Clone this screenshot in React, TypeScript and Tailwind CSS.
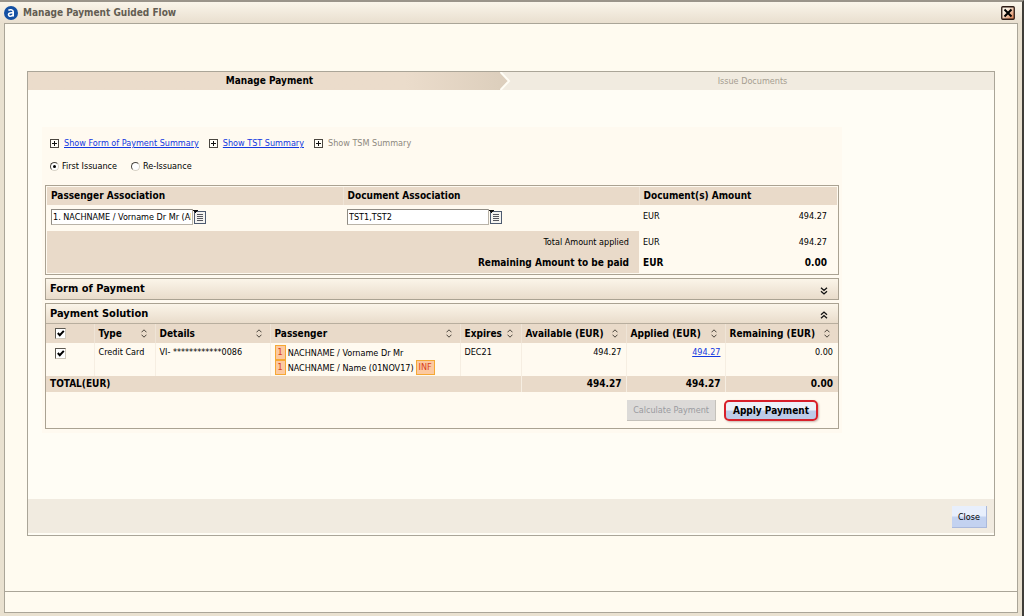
import { useState, type ReactNode } from "react";

function PlusBox() {
  return (
    <svg width="9" height="9" viewBox="0 0 9 9" shapeRendering="crispEdges" aria-hidden="true">
      <rect x="0.5" y="0.5" width="8" height="8" fill="#fffdf6" stroke="#4a4640" />
      <path d="M2 4.5h5M4.5 2v5" stroke="#111" strokeWidth="1" />
    </svg>
  );
}

function SortIcon() {
  return (
    <svg width="6" height="9" viewBox="0 0 6 9" fill="none" stroke="#4a443c" strokeWidth="1" aria-hidden="true">
      <path d="M0.5 3.3L3 0.8L5.5 3.3M0.5 5.7L3 8.2L5.5 5.7" />
    </svg>
  );
}

function DoubleChevron({ up = false }: { up?: boolean }) {
  return (
    <svg width="8" height="8" viewBox="0 0 8 8" fill="none" stroke="#111" strokeWidth="1.3" aria-hidden="true">
      {up ? (
        <path d="M1 3.7L4 1L7 3.7M1 7.2L4 4.5L7 7.2" />
      ) : (
        <path d="M1 0.8L4 3.5L7 0.8M1 4.3L4 7L7 4.3" />
      )}
    </svg>
  );
}

function ListIcon() {
  return (
    <svg width="13" height="14" viewBox="0 0 13 14" shapeRendering="crispEdges" aria-hidden="true">
      <rect x="1.5" y="1.5" width="11" height="12" fill="#f4f3f0" stroke="#4d5a70" />
      <path d="M4 4.5h6M4 6.5h6M4 8.5h6M4 10.5h6" stroke="#55565e" />
      <path d="M0 0h5v1h-1v1h-1v1h-1v-1h-1v-1h-1z" fill="#111" />
    </svg>
  );
}

function TickBox({ label, checked, onChange }: { label: string; checked: boolean; onChange: (v: boolean) => void }) {
  return (
    <span className="relative block size-[11px]">
      <input
        type="checkbox"
        aria-label={label}
        checked={checked}
        onChange={(e) => onChange(e.target.checked)}
        className="peer block size-[11px] appearance-none border border-t-[#5c5850] border-r-[#cfc8bb] border-b-[#cfc8bb] border-l-[#5c5850] bg-white"
      />
      <svg
        className="pointer-events-none absolute inset-0 hidden peer-checked:block"
        width="11"
        height="11"
        viewBox="0 0 11 11"
        aria-hidden="true"
      >
        <path d="M2.8 5L4.8 7.2L8.8 2.8" fill="none" stroke="#000" strokeWidth="2" />
      </svg>
    </span>
  );
}

function Radio({ label, checked, onSelect }: { label: string; checked: boolean; onSelect: () => void }) {
  return (
    <label className="flex items-center gap-[3px]">
      <span className="relative block size-[9px]">
        <input
          type="radio"
          name="issuance"
          checked={checked}
          onChange={onSelect}
          className="peer block size-[9px] appearance-none rounded-full border border-t-[#4a4640] border-r-[#d8d2c6] border-b-[#d8d2c6] border-l-[#4a4640] bg-white"
        />
        <span className="pointer-events-none absolute inset-[3px] hidden rounded-full bg-black peer-checked:block" />
      </span>
      {label}
    </label>
  );
}

function PickField({ label, value }: { label: string; value: string }) {
  return (
    <div className="flex items-center">
      <input
        type="text"
        aria-label={label}
        defaultValue={value}
        className="h-4 w-[142px] border border-t-[#8f8b83] border-r-[#b9b3a8] border-b-[#b9b3a8] border-l-[#8f8b83] bg-white px-px"
      />
      <button type="button" aria-label={`Select ${label}`}>
        <ListIcon />
      </button>
    </div>
  );
}

function Tag({ children }: { children: ReactNode }) {
  return (
    <span className="flex h-[15px] items-center border border-[#f5a835] bg-[#fcc9a0] px-[2px] leading-none text-[#d8401c]">
      {children}
    </span>
  );
}

const columns = [
  { name: "Type", width: "w-[61px]" },
  { name: "Details", width: "w-[115px]" },
  { name: "Passenger", width: "w-[190px]" },
  { name: "Expires", width: "w-[61px]" },
  { name: "Available (EUR)", width: "w-[105px]" },
  { name: "Applied (EUR)", width: "w-[99px]" },
  { name: "Remaining (EUR)", width: "" },
];

const bar = "flex items-center justify-between bg-linear-to-b from-[#fbf5e9] to-[#e9dccb] pr-[10px] pl-1 text-[11px] font-bold";
const frame = "border border-[#aaa292]";

export default function App() {
  const [issuance, setIssuance] = useState("first");
  const [all, setAll] = useState(true);
  const [card, setCard] = useState(true);

  return (
    <div className="flex min-h-screen flex-col border-t-2 border-r-2 border-t-[#9a948a] border-r-[#3f3d38] bg-[#e9e1d0] font-['DejaVu_Sans_Condensed','DejaVu_Sans',sans-serif] text-[9px] leading-[14px] text-black">
      <header className="flex h-[21px] items-center justify-between bg-linear-to-b from-[#faf5ea] to-[#e9dfcf] pr-[7px] pl-1">
        <div className="flex items-center gap-[5px]">
          <svg width="14" height="14" viewBox="0 0 14 14" aria-hidden="true">
            <circle cx="7" cy="7" r="7" fill="#1450a3" />
            <path
              d="M4.4 4.3C5.6 3.5 9.2 3.3 9.2 5.8V10.4M9.2 7C7.2 6.6 4.5 6.8 4.5 8.6C4.5 10.8 8.2 10.6 9.2 8.6"
              fill="none"
              stroke="#fff"
              strokeWidth="1.6"
            />
          </svg>
          <h1 className="text-[10px] font-bold text-[#635d52]">Manage Payment Guided Flow</h1>
        </div>
        <button type="button" aria-label="Close window">
          <svg width="14" height="14" viewBox="0 0 14 14" aria-hidden="true">
            <defs>
              <linearGradient id="closeFill" x1="0" y1="0" x2="1" y2="1">
                <stop offset="0.3" stopColor="#fbf0e2" />
                <stop offset="1" stopColor="#d9733f" />
              </linearGradient>
            </defs>
            <rect x="0.75" y="0.75" width="12.5" height="12.5" rx="1" fill="url(#closeFill)" stroke="#2c1a14" strokeWidth="1.3" />
            <path d="M3.5 3.5L10.5 10.5M10.5 3.5L3.5 10.5" stroke="#000" strokeWidth="2" />
          </svg>
        </button>
      </header>

      <div className="mr-1 mb-[3px] ml-1 flex grow flex-col border border-[#aaa598] bg-[#fffbf0]">
        <main className="flex grow flex-col px-[22px] pt-[47px] pb-[55px]">
          <div className="flex grow flex-col border border-[#aaa598] bg-[#fffdf5] pb-[2px]">
            <ol className="grid h-[18px] grid-cols-2 bg-[#f1ebe0] text-center">
              <li aria-current="step" className="flex items-center font-bold">
                <span className="h-full grow bg-linear-to-r from-[#ebdccb] from-80% to-[#ddcfbd] pt-[2px] pl-[11px] text-[10px]">Manage Payment</span>
                <svg width="11" height="18" viewBox="0 0 11 18" aria-hidden="true">
                  <path d="M0 0L9 9L0 18Z" fill="#ddcfbd" />
                  <path d="M0.5 0L9 9L0.5 18" fill="none" stroke="#fffdf5" strokeWidth="2" />
                </svg>
              </li>
              <li className="pt-[2px] text-[#a59d90]">Issue Documents</li>
            </ol>

            <div className="mt-[37px] ml-[14px] grow">
              <div className="max-w-[800px] bg-[#fffaf0] px-[3px] pt-2 pb-1">
                <div className="flex h-4 items-center gap-[10px] pl-[5px]">
                  <div className="flex items-center gap-[5px]">
                    <PlusBox />
                    <a href="#fop" className="text-[#1238e0] underline">Show Form of Payment Summary</a>
                  </div>
                  <div className="flex items-center gap-[5px]">
                    <PlusBox />
                    <a href="#tst" className="text-[#1238e0] underline">Show TST Summary</a>
                  </div>
                  <div className="flex items-center gap-[5px]">
                    <PlusBox />
                    <span className="text-[#8d887e]">Show TSM Summary</span>
                  </div>
                </div>

                <div className="mt-[7px] flex h-4 items-center gap-[14px] pl-[5px]">
                  <Radio label="First Issuance" checked={issuance === "first"} onSelect={() => setIssuance("first")} />
                  <Radio label="Re-Issuance" checked={issuance === "re"} onSelect={() => setIssuance("re")} />
                </div>

                <div className={`mt-[11px] p-px ${frame}`}>
                  <table className="w-full table-fixed border-collapse">
                    <thead>
                      <tr className="h-[18px] bg-[#e9dac9] text-left text-[10px]">
                        <th className="w-[296px] border-r border-[#efe4d6] pl-1">Passenger Association</th>
                        <th className="w-[296px] border-r border-[#efe4d6] pl-1">Document Association</th>
                        <th className="pl-1" colSpan={2}>Document(s) Amount</th>
                      </tr>
                    </thead>
                    <tbody>
                      <tr className="h-[26px]">
                        <td className="pb-[2px] pl-1"><PickField label="Passenger Association" value="1. NACHNAME / Vorname Dr Mr (ADT)" /></td>
                        <td className="pb-[2px] pl-1"><PickField label="Document Association" value="TST1,TST2" /></td>
                        <td className="pb-1 pl-1">EUR</td>
                        <td className="pr-[10px] pb-1 text-right">494.27</td>
                      </tr>
                      <tr className="h-[21px]">
                        <td colSpan={2} className="bg-[#e9dac9] pr-[10px] text-right">Total Amount applied</td>
                        <td className="pl-1">EUR</td>
                        <td className="pr-[10px] text-right">494.27</td>
                      </tr>
                      <tr className="h-[21px] text-[10px] font-bold">
                        <td colSpan={2} className="bg-[#e9dac9] pr-[10px] text-right">Remaining Amount to be paid</td>
                        <td className="pl-1">EUR</td>
                        <td className="pr-[10px] text-right">0.00</td>
                      </tr>
                    </tbody>
                  </table>
                </div>

                <section className={`mt-[3px] ${frame}`}>
                  <div className={`h-[20px] ${bar}`}>
                    <h2>Form of Payment</h2>
                    <button type="button" aria-label="Expand Form of Payment" className="pt-[3px]"><DoubleChevron /></button>
                  </div>
                </section>

                <section className={`mt-[3px] ${frame}`}>
                  <div className={`h-[20px] border-b border-[#b8ae9e] ${bar}`}>
                    <h2>Payment Solution</h2>
                    <button type="button" aria-label="Collapse Payment Solution" className="pt-[3px]"><DoubleChevron up /></button>
                  </div>
                  <table className="w-full table-fixed border-collapse">
                    <thead>
                      <tr className="h-[19px] bg-[#e9dac9] text-left text-[10px]">
                        <th className="w-[48px] border-r border-[#efe4d6] pl-[9px]">
                          <TickBox label="Select all payments" checked={all} onChange={setAll} />
                        </th>
                        {columns.map((c) => (
                          <th key={c.name} className={`border-r border-[#efe4d6] pr-2 pl-1 last:border-r-0 ${c.width}`}>
                            <div className="flex items-center justify-between whitespace-nowrap">
                              {c.name}
                              <SortIcon />
                            </div>
                          </th>
                        ))}
                      </tr>
                    </thead>
                    <tbody>
                      <tr className="h-[33px] align-top [&>td]:border-r [&>td]:border-[#f6eee2] [&>td:last-child]:border-r-0">
                        <td className="pt-[5px] pl-[9px]">
                          <TickBox label="Select credit card payment" checked={card} onChange={setCard} />
                        </td>
                        <td className="pt-[2px] pl-1 whitespace-nowrap">Credit Card</td>
                        <td className="pt-[2px] pl-1 whitespace-nowrap">VI- ************0086</td>
                        <td className="pt-[2px] pl-1 whitespace-nowrap">
                          <div className="flex items-center gap-[2px]"><Tag>1</Tag>NACHNAME / Vorname Dr Mr</div>
                          <div className="flex items-center gap-[2px]"><Tag>1</Tag>NACHNAME / Name (01NOV17)<Tag>INF</Tag></div>
                        </td>
                        <td className="pt-[2px] pl-1">DEC21</td>
                        <td className="pt-[2px] pr-1 text-right">494.27</td>
                        <td className="pt-[2px] pr-1 text-right"><a href="#applied" className="text-[#1238e0] underline">494.27</a></td>
                        <td className="pt-[2px] pr-[5px] text-right">0.00</td>
                      </tr>
                      <tr className="h-4 bg-[#e9dac9] text-[10px] font-bold">
                        <td colSpan={5} className="border-r border-[#f6eee2] pl-1">TOTAL(EUR)</td>
                        <td className="border-r border-[#f6eee2] pr-1 text-right">494.27</td>
                        <td className="border-r border-[#f6eee2] pr-1 text-right">494.27</td>
                        <td className="pr-[5px] text-right">0.00</td>
                      </tr>
                    </tbody>
                  </table>
                  <div className="flex items-center justify-end gap-2 bg-[#fffaf0] pt-2 pr-5 pb-[7px]">
                    <button type="button" disabled className="h-[21px] border-r border-b border-[#c4c1ba] bg-[#dcdad8] px-[6px] text-[#9a9aa0]">
                      Calculate Payment
                    </button>
                    <button type="button" className="h-[21px] rounded-[5px] border-2 border-[#d8202a] bg-linear-to-b from-[#edf1f8] from-45% to-[#bccbe8] to-55% px-[7px] text-[10px] leading-none font-bold shadow-[1px_1px_2px_#c9b8b0]">
                      Apply Payment
                    </button>
                  </div>
                </section>
              </div>
            </div>

            <footer className="flex h-[34px] items-center justify-end bg-[#f1ebe0] pt-[2px] pr-[7px]">
              <button type="button" className="h-[22px] border-r border-b border-[#aab9dc] bg-linear-to-b from-[#e8effc] from-45% to-[#c3d2f0] to-55% px-[6px]">
                Close
              </button>
            </footer>
          </div>
        </main>
        <div className="h-[21px] border-t border-[#aaa598]" />
      </div>
    </div>
  );
}
